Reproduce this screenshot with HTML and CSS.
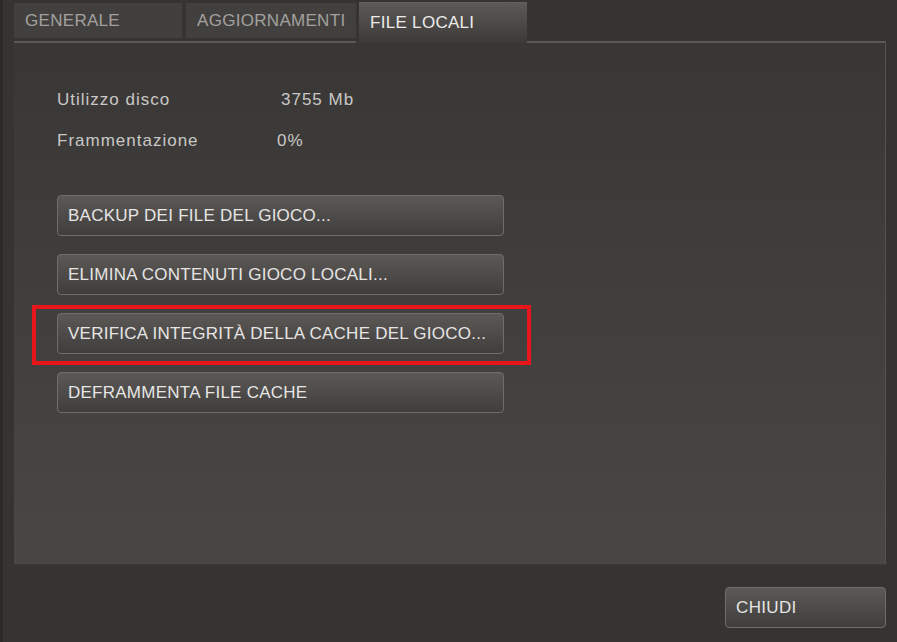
FILE: index.html
```html
<!DOCTYPE html>
<html lang="it">
<head>
<meta charset="utf-8">
<title>Proprietà - File locali</title>
<link rel="stylesheet" href="styles.css">
</head>
<body>
<div class="window">
  <div class="tabbar">
    <div class="tabgroup">
      <div class="tab tab-generale">GENERALE</div>
      <div class="tab tab-agg">AGGIORNAMENTI</div>
    </div>
    <div class="tab active">FILE LOCALI</div>
    <div class="filler"></div>
  </div>
  <div class="panel">
    <div class="info">
      <div class="info-row"><span class="label">Utilizzo disco</span><span class="value v1">3755 Mb</span></div>
      <div class="info-row"><span class="label">Frammentazione</span><span class="value v2">0%</span></div>
    </div>
    <div class="actions">
      <button class="btn">BACKUP DEI FILE DEL GIOCO...</button>
      <button class="btn">ELIMINA CONTENUTI GIOCO LOCALI...</button>
      <div class="highlight-wrap">
        <button class="btn">VERIFICA INTEGRITÀ DELLA CACHE DEL GIOCO...</button>
        <div class="highlight"></div>
      </div>
      <button class="btn">DEFRAMMENTA FILE CACHE</button>
    </div>
  </div>
  <div class="footer">
    <button class="btn btn-close">CHIUDI</button>
  </div>
</div>
</body>
</html>
```
FILE: styles.css
```css
html, body {
  margin: 0;
  padding: 0;
  height: 100%;
}
body {
  background: #363432;
  border-left: 3px solid #2d2b2a;
  font-family: "Liberation Sans", Arial, sans-serif;
  overflow: hidden;
}
.window {
  padding: 2px 11px 0 11px;
}
.tabbar {
  display: flex;
  height: 41px;
}
.tabgroup {
  display: flex;
  gap: 4px;
  border-bottom: 2px solid #5a5856;
  padding-top: 1px;
  padding-bottom: 3px;
}
.tab {
  display: flex;
  align-items: center;
  padding-left: 11px;
  font-size: 17px;
  letter-spacing: 0.3px;
  color: #a3a19f;
  background: #42403e;
  box-sizing: border-box;
}
.tab-generale { width: 168px; }
.tab-agg { width: 170px; }
.tab.active {
  width: 168px;
  margin-left: 3px;
  color: #ecebea;
  background: linear-gradient(#5c5957, #3c3a38);
  border-top: 1px solid #625f5d;
}
.filler {
  flex: 1;
  border-bottom: 2px solid #5a5856;
}
.panel {
  height: 522px;
  box-sizing: border-box;
  background: linear-gradient(#393736, #494746);
  border-right: 1px solid #555351;
  border-bottom: 1px solid #3c3a39;
  padding: 36px 0 0 43px;
}
.info-row {
  display: flex;
  font-size: 17px;
  letter-spacing: 1px;
  color: #c9c7c5;
  height: 41px;
  align-items: center;
}
.label { width: 224px; }
.v2 { margin-left: -4px; }
.actions {
  margin-top: 34px;
  display: flex;
  flex-direction: column;
  gap: 18px;
  width: 447px;
}
.btn {
  display: block;
  box-sizing: border-box;
  width: 447px;
  height: 41px;
  padding: 0 0 0 10px;
  text-align: left;
  font-family: "Liberation Sans", Arial, sans-serif;
  font-size: 17px;
  letter-spacing: 0.25px;
  color: #e6e5e4;
  background: linear-gradient(#5b5856, #403e3c);
  border: 1px solid #6f6d6b;
  border-radius: 4px;
}
.highlight-wrap {
  position: relative;
}
.highlight {
  position: absolute;
  left: -25px;
  top: -8px;
  right: -27px;
  bottom: -11px;
  border: 4px solid #e8161b;
}
.footer {
  display: flex;
  justify-content: flex-end;
  padding-top: 22px;
}
.btn-close {
  width: 161px;
  letter-spacing: 0.35px;
}
```
